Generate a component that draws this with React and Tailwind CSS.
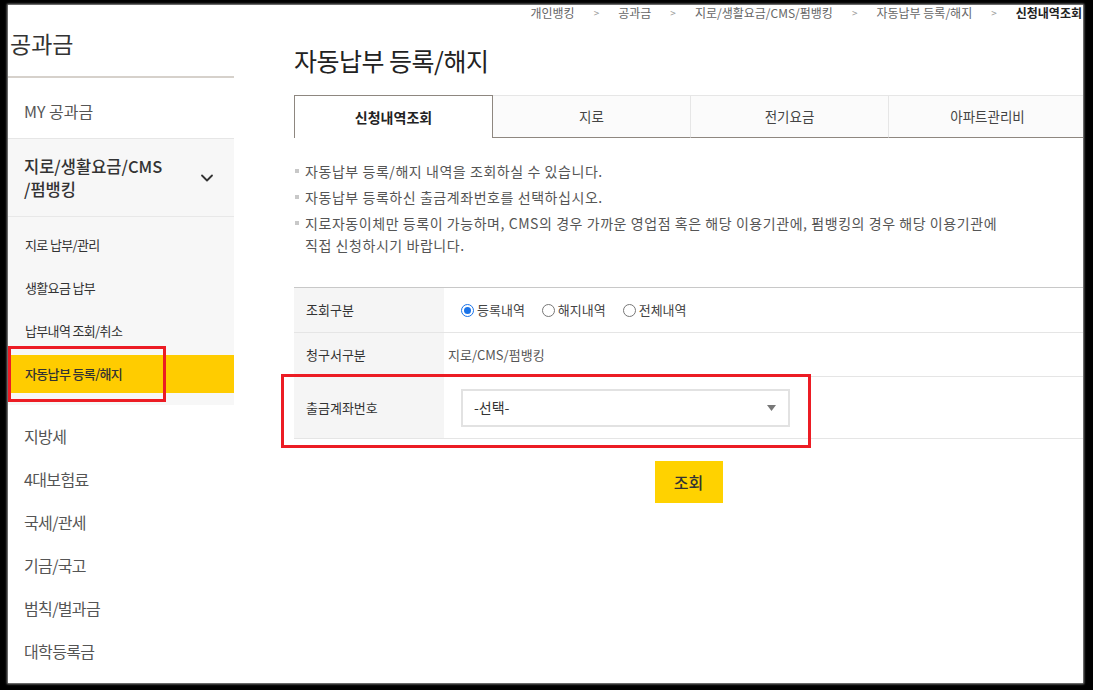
import React from 'react';
import { ChevronDown } from 'lucide-react';

const subMenu = ['지로 납부/관리', '생활요금 납부', '납부내역 조회/취소'];
const otherMenu = ['지방세', '4대보험료', '국세/관세', '기금/국고', '범칙/벌과금', '대학등록금'];
const tabs = ['신청내역조회', '지로', '전기요금', '아파트관리비'];
const crumbs = ['개인뱅킹', '공과금', '지로/생활요금/CMS/펌뱅킹', '자동납부 등록/해지'];

const Radio = ({ checked, label }) => (
  <label className="flex items-center">
    {checked ? (
      <span className="w-[13px] h-[13px] rounded-full border-[1.5px] border-[#1a73e8] bg-white flex items-center justify-center">
        <span className="w-[7px] h-[7px] rounded-full bg-[#1a73e8]" />
      </span>
    ) : (
      <span className="w-[13px] h-[13px] rounded-full border border-[#777] bg-white" />
    )}
    <span className="ml-[3px]">{label}</span>
  </label>
);

const Bullet = () => <span className="w-[4px] h-[4px] mt-[9px] ml-[1px] mr-[6px] bg-[#c8c8c8] shrink-0" />;

const Sidebar = () => (
  <aside className="w-[226px] shrink-0 text-[#333]">
    <div className="h-[73px] flex items-center pt-[5px] pl-[2px] border-b-2 border-[#d6d1cb]">
      <h1 className="text-[23px] leading-[30px]">공과금</h1>
    </div>
    <div className="h-[61px] flex items-center pt-[6px] pl-[16px] text-[16px] text-[#555] border-b border-[#e6e6e6]">
      MY 공과금
    </div>
    <div className="h-[78px] flex items-center justify-between pl-[16px] pr-[17px] bg-[#f7f7f7] border-b border-[#e8e8e8]">
      <span className="text-[16.5px] leading-[23px] font-medium">
        지로/생활요금/CMS
        <br />
        /펌뱅킹
      </span>
      <ChevronDown size={20} strokeWidth={2.2} className="text-[#333]" />
    </div>
    <ul className="bg-[#f7f7f7] pt-[9px] pb-[12px] flex flex-col gap-[5px] text-[13px] tracking-[-0.05em]">
      {subMenu.map((m) => (
        <li key={m} className="h-[38px] flex items-center pl-[17px]">{m}</li>
      ))}
      <li className="relative h-[38px] flex items-center pl-[17px] bg-[#ffcc00] font-medium">
        자동납부 등록/해지
        <span className="absolute left-0 top-[-9px] w-[158px] h-[56px] border-[3px] border-[#ec1c24]" />
      </li>
    </ul>
    <ul className="pt-[9px] text-[16px] tracking-[-0.04em] text-[#555]">
      {otherMenu.map((m) => (
        <li key={m} className="h-[43px] flex items-center pl-[16px]">{m}</li>
      ))}
    </ul>
  </aside>
);

const Main = () => (
  <main className="flex-1 min-w-0 pl-[60px] text-[#555]">
    <div className="h-[16px] leading-[16px] pr-[1px] flex items-center justify-end whitespace-nowrap text-[12px] text-[#666]">
      {crumbs.map((c) => (
        <React.Fragment key={c}>
          <span>{c}</span>
          <span className="mx-[19px] text-[10px] text-[#999]">&gt;</span>
        </React.Fragment>
      ))}
      <span className="font-bold text-[#222]">신청내역조회</span>
    </div>

    <h2 className="mt-[23px] h-[32px] leading-[32px] text-[25px] tracking-[-0.02em] text-[#222]">자동납부 등록/해지</h2>

    <div className="mt-[19px] flex whitespace-nowrap">
      {tabs.map((t, i) =>
        i === 0 ? (
          <div key={t} className="w-[199px] shrink-0 h-[43px] flex items-center justify-center bg-white border-t border-l border-r border-[#8e8780] text-[14px] font-bold text-[#222]">
            {t}
          </div>
        ) : (
          <div key={t} className="w-[198px] shrink-0 h-[43px] flex items-center justify-center bg-[#fbfbfb] border-t border-r border-t-[#e6e6e6] border-r-[#e6e6e6] border-b border-b-[#8e8780] text-[13.5px] text-[#444]">
            {t}
          </div>
        )
      )}
    </div>

    <ul className="mt-[22px] flex flex-col gap-[4px] text-[14px] leading-[22px] tracking-[0.04em]">
      <li className="flex">
        <Bullet />
        자동납부 등록/해지 내역을 조회하실 수 있습니다.
      </li>
      <li className="flex">
        <Bullet />
        자동납부 등록하신 출금계좌번호를 선택하십시오.
      </li>
      <li className="flex">
        <Bullet />
        <span>
          지로자동이체만 등록이 가능하며, CMS의 경우 가까운 영업점 혹은 해당 이용기관에, 펌뱅킹의 경우 해당 이용기관에
          <br />
          직접 신청하시기 바랍니다.
        </span>
      </li>
    </ul>

    <div className="mt-[31px] border-t border-[#c8c8c8] text-[13px]">
      <div className="h-[45px] flex border-b border-[#e5e5e5]">
        <div className="w-[150px] shrink-0 flex items-center pl-[12px] bg-[#f5f5f5] text-[#333]">조회구분</div>
        <div className="flex items-center pl-[17px] gap-[17px] text-[#444]">
          <Radio checked label="등록내역" />
          <Radio label="해지내역" />
          <Radio label="전체내역" />
        </div>
      </div>
      <div className="h-[44px] flex border-b border-[#e5e5e5]">
        <div className="w-[150px] shrink-0 flex items-center pl-[12px] bg-[#f5f5f5] text-[#333]">청구서구분</div>
        <div className="flex items-center pl-[4px] text-[#555]">지로/CMS/펌뱅킹</div>
      </div>
      <div className="relative h-[62px] flex border-b border-[#e5e5e5]">
        <div className="w-[150px] shrink-0 flex items-center pl-[12px] bg-[#f5f5f5] text-[#333]">출금계좌번호</div>
        <div className="flex items-center pl-[17px]">
          <div className="w-[329px] h-[38px] flex items-center justify-between pl-[11px] pr-[12px] border-2 border-[#e2e2e2] bg-white text-[14px] text-[#333]">
            <span>-선택-</span>
            <svg width="9" height="6" viewBox="0 0 9 6">
              <path d="M0 0 L9 0 L4.5 6 Z" fill="#777" />
            </svg>
          </div>
        </div>
        <span className="absolute left-[-13px] top-[-3px] w-[530px] h-[74px] border-[3px] border-[#ec1c24]" />
      </div>
    </div>

    <div className="mt-[22px] flex justify-center">
      <button className="w-[68px] h-[42px] bg-[#ffd200] text-[16px] font-medium text-[#333]">조회</button>
    </div>
  </main>
);

export default function App() {
  return (
    <div className="w-[1093px] h-[690px] bg-black pt-[5px] pl-[8px] font-['Noto_Sans_CJK_KR',sans-serif]">
      <div className="w-[1075px] h-[678px] bg-white overflow-hidden flex shadow-[0_0_2px_1px_#9a9a9a]">
        <Sidebar />
        <Main />
      </div>
    </div>
  );
}
